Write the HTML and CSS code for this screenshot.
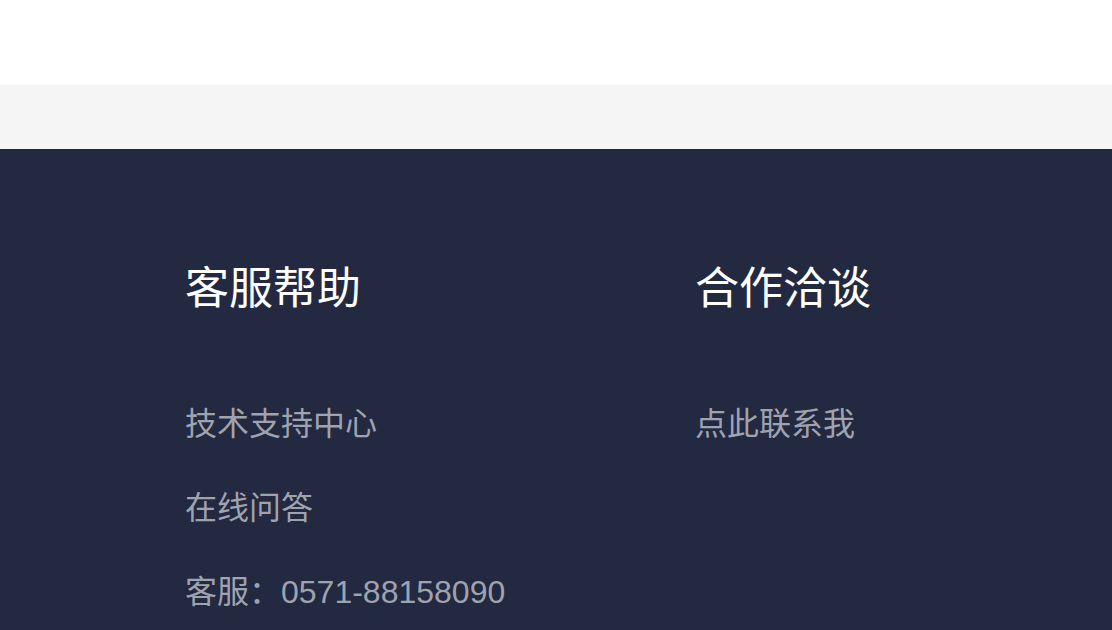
FILE: index.html
```html
<!DOCTYPE html>
<html lang="zh-CN">
<head>
<meta charset="utf-8">
<title>Footer</title>
<link rel="stylesheet" href="styles.css">
</head>
<body>
<div class="top"></div>
<div class="band"></div>
<footer class="footer">
  <div class="col col-help">
    <h2 class="col-title">客服帮助</h2>
    <ul class="links">
      <li class="link">技术支持中心</li>
      <li class="link">在线问答</li>
      <li class="link">客服：<span class="num">0571-88158090</span></li>
    </ul>
  </div>
  <div class="col">
    <h2 class="col-title">合作洽谈</h2>
    <ul class="links">
      <li class="link">点此联系我</li>
    </ul>
  </div>
</footer>
</body>
</html>
```
FILE: styles.css
```css
html, body {
  margin: 0;
  padding: 0;
  height: 630px;
  overflow: hidden;
  font-family: "Noto Sans CJK SC", "Liberation Sans", sans-serif;
  background: #232940;
}
.top {
  height: 85px;
  background: #ffffff;
}
.band {
  height: 64px;
  background: #f5f5f5;
}
.footer {
  display: flex;
  box-sizing: border-box;
  height: 481px;
  overflow: hidden;
  padding: 114px 0 0 185px;
  background: #232940;
}
.col-help {
  width: 510px;
}
.col-title {
  margin: 0;
  font-size: 44px;
  line-height: 44px;
  font-weight: 400;
  color: #ffffff;
}
.links {
  list-style: none;
  margin: 72px 0 0;
  padding: 0;
}
.link {
  font-size: 32px;
  line-height: 84px;
  color: #9fa3b0;
}
.num {
  font-family: "Liberation Sans", sans-serif;
}
```
